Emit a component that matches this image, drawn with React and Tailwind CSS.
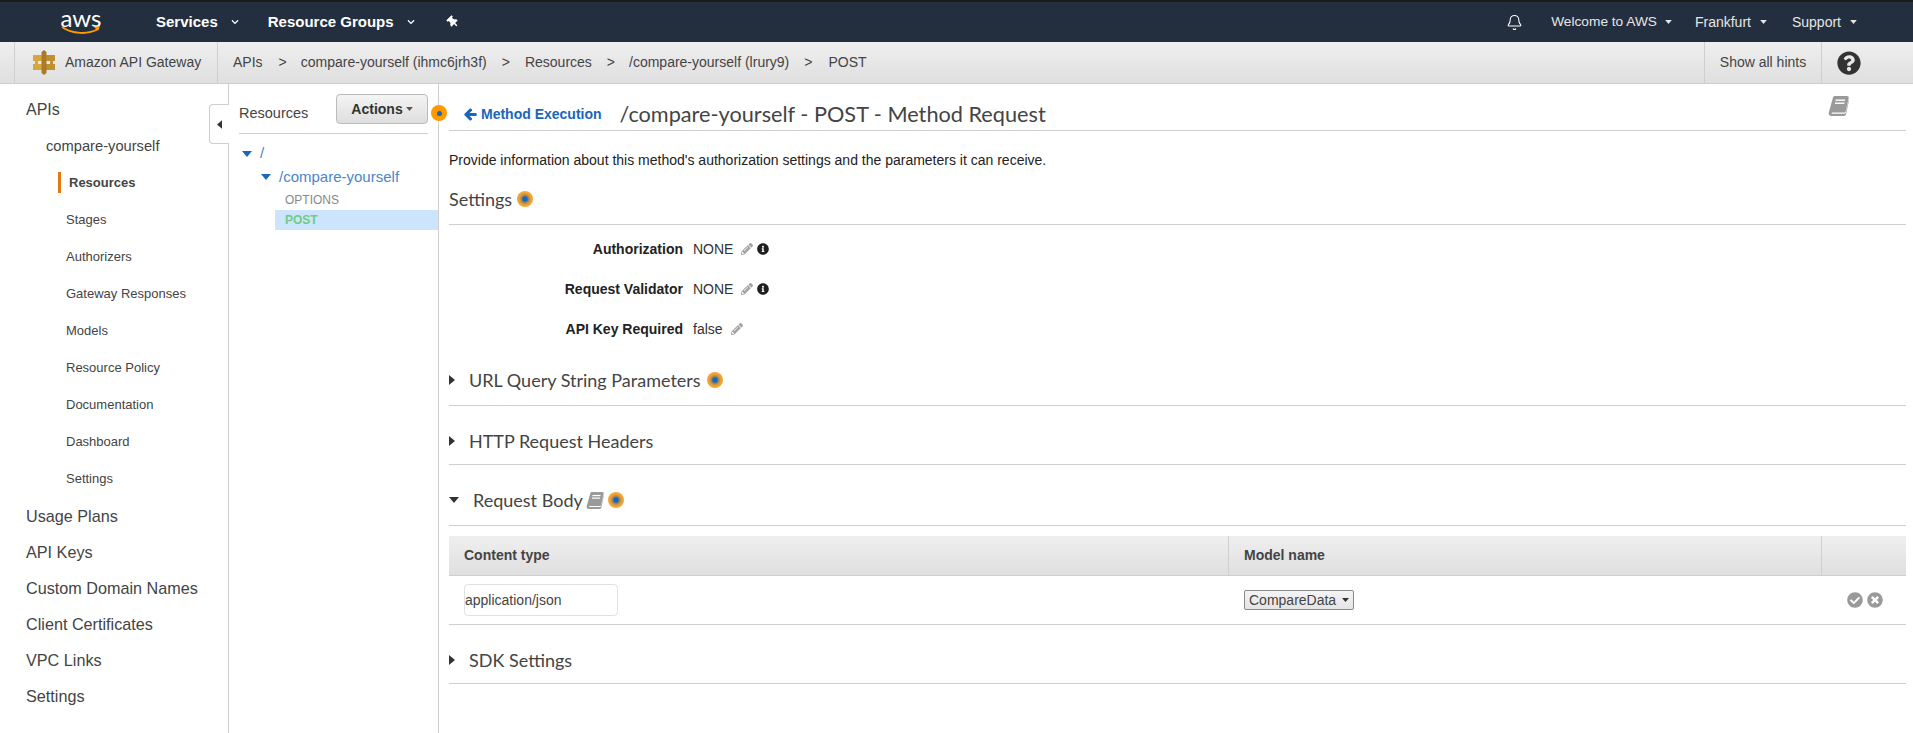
import { Bell } from "lucide-react";
import {
  FaArrowLeft,
  FaCheckCircle,
  FaChevronDown,
  FaInfoCircle,
  FaPencilAlt,
  FaQuestionCircle,
  FaThumbtack,
  FaTimesCircle,
} from "react-icons/fa";

const arial = "font-['Liberation_Sans',Arial,sans-serif]";
const lato = "font-['Lato',sans-serif]";

const CaretDown = ({ className = "" }) => (
  <svg viewBox="0 0 10 6" className={className}>
    <polygon points="0,0 10,0 5,6" fill="currentColor" />
  </svg>
);

const CaretRight = ({ className = "" }) => (
  <svg viewBox="0 0 6 10" className={className}>
    <polygon points="0,0 6,5 0,10" fill="currentColor" />
  </svg>
);

const BookIcon = ({ className = "" }) => (
  <svg viewBox="0 0 21 20" className={className}>
    <path
      d="M5 1.5C5.3.6 6 0 7 0h12c1.2 0 2 .9 1.7 2l-3 13.2c-.3 1-.9 1.4-1.8 1.4H4.500c-.9 0-1.200.9-.6 1.100h12.500c.6 0 1-.3 1.200-.8L20.800 3.500l.2 1-3 13.800c-.2 1-1 1.700-2 1.700H3.500C1.500 20 .3 18.500.7 16.700z"
      fill="#9a9a9a"
    />
    <rect x="7.500" y="3.500" width="9.500" height="1.400" fill="#fff" />
    <rect x="7" y="6.500" width="9.500" height="1.400" fill="#fff" />
  </svg>
);

const GatewayIcon = () => (
  <svg viewBox="0 0 22 25" className="w-[22px] h-[25px]">
    <path d="M0 5h10v6H5v3h5v6H0v-6h2V11H0z" fill="#d8a63f" />
    <path d="M12 5h10v6h-2v3h2v6H12v-6h5v-3h-5z" fill="#c08f30" />
    <path d="M8.500 2l2.500-2 2.500 2v21l-2.500 2-2.500-2z" fill="#a97b28" />
  </svg>
);

const Hint = ({ className = "" }) => (
  <span
    className={`inline-block w-4 h-4 rounded-full shrink-0 bg-[radial-gradient(circle,#1a66b8_0%,#1a66b8_18%,#a98a5a_34%,#f2a02c_52%,#fbb64a_100%)] ${className}`}
  />
);

const navItems = [
  "Stages",
  "Authorizers",
  "Gateway Responses",
  "Models",
  "Resource Policy",
  "Documentation",
  "Dashboard",
  "Settings",
];

const bottomItems = [
  "Usage Plans",
  "API Keys",
  "Custom Domain Names",
  "Client Certificates",
  "VPC Links",
  "Settings",
];

const TopBar = () => (
  <header className="h-[42px] shrink-0 bg-[#232f3e] border-t-2 border-[#1b1b1b] flex items-center text-[14px] text-[#e6e6e6]">
    <div className="w-[61px]" />
    <div className="w-[40px] h-[24px] relative flex justify-center">
      <span className={`${lato} text-[24px] leading-[20px] text-white -mt-[2px]`}>aws</span>
      <svg viewBox="0 0 40 10" className="absolute left-0 top-[15px] w-[40px] h-[10px]">
        <path d="M1 2c10 7 26 8 36 2" stroke="#f90" strokeWidth="2" fill="none" />
        <path d="M33 2l6-1-2 5z" fill="#f90" />
      </svg>
    </div>
    <div className="ml-[55px] flex items-center font-bold text-[15px] text-white">
      <span>Services</span>
      <FaChevronDown className="ml-[13px] w-[8px] h-[8px]" />
      <span className="ml-[29px]">Resource Groups</span>
      <FaChevronDown className="ml-[13px] w-[8px] h-[8px]" />
      <FaThumbtack className="ml-[32px] w-[12px] h-[12px] -rotate-45" />
    </div>
    <div className="ml-auto flex items-center">
      <Bell className="w-[17px] h-[17px] text-white" strokeWidth={1.5} />
      <span className="ml-[28px] text-[13.700px]">Welcome to AWS</span>
      <CaretDown className="ml-[8px] w-[7px] h-[4px]" />
      <span className="ml-[23px]">Frankfurt</span>
      <CaretDown className="ml-[9px] w-[7px] h-[4px]" />
      <span className="ml-[25px]">Support</span>
      <CaretDown className="ml-[9px] w-[7px] h-[4px] mr-[56px]" />
    </div>
  </header>
);

const BreadcrumbBar = () => (
  <div className="h-[42px] shrink-0 bg-gradient-to-b from-[#efefef] to-[#dfdfdf] border-b border-[#cfcfcf] flex items-stretch text-[14px] text-[#444]">
    <div className="w-[15px] border-r border-[#cfcfcf]" />
    <div className="w-[203px] border-r border-[#cfcfcf] flex items-center pl-[18px]">
      <GatewayIcon />
      <span className="ml-[10px]">Amazon API Gateway</span>
    </div>
    <div className="flex items-center pl-[15px]">
      <span>APIs</span>
      <span className="ml-[16px]">&gt;</span>
      <span className="ml-[14px]">compare-yourself (ihmc6jrh3f)</span>
      <span className="ml-[15px]">&gt;</span>
      <span className="ml-[15px]">Resources</span>
      <span className="ml-[15px]">&gt;</span>
      <span className="ml-[14px]">/compare-yourself (lrury9)</span>
      <span className="ml-[15px]">&gt;</span>
      <span className="ml-[16px]">POST</span>
    </div>
    <div className="ml-auto w-[118px] border-l border-r border-[#cfcfcf] flex items-center justify-center">
      Show all hints
    </div>
    <div className="w-[91px] flex items-center pl-[15px]">
      <FaQuestionCircle className="w-[24px] h-[24px] text-[#333]" />
    </div>
  </div>
);

const Sidebar = () => (
  <aside className="w-[229px] shrink-0 border-r border-[#cfcfcf] pt-[8px] text-[#444]">
    <div className="h-[36px] flex items-center pl-[26px] text-[16px]">APIs</div>
    <div className="h-[36px] flex items-center pl-[46px] text-[14.700px]">compare-yourself</div>
    <div className="h-[37px] flex items-center pl-[58px] text-[13px] font-bold">
      <span className="w-[3px] h-[21px] bg-[#e47911] mr-[8px]" />
      Resources
    </div>
    {navItems.map((item) => (
      <div key={item} className="h-[37px] flex items-center pl-[66px] text-[13px]">
        {item}
      </div>
    ))}
    <div className="mt-[1px]">
      {bottomItems.map((item, i) => (
        <div key={i} className="h-[36px] flex items-center pl-[26px] text-[16.200px]">
          {item}
        </div>
      ))}
    </div>
  </aside>
);

const ResourcePanel = () => (
  <section className="w-[210px] shrink-0 border-r border-[#cfcfcf] relative pt-[10px]">
    {/* collapse tab */}
    <div className="absolute -left-[20px] top-[20px] w-[20px] h-[40px] bg-white border border-r-0 border-[#cfcfcf] rounded-l flex items-center justify-center text-[#333]">
      <CaretRight className="w-[5px] h-[9px] rotate-180" />
    </div>
    {/* hint sits on the divider */}
    <span className="absolute -right-[9px] top-[21px] w-4 h-4 rounded-full bg-[#ff9900] flex items-center justify-center z-10">
      <span className="w-[5px] h-[5px] rounded-full bg-[#1a66b8]" />
    </span>
    <div className="ml-[10px] mr-[10px] h-[40px] border-b border-[#cfcfcf] flex items-start justify-between">
      <span className="text-[14.500px] text-[#444] mt-[9px]">Resources</span>
      <button className="w-[92px] h-[30px] rounded border border-[#bbb] bg-gradient-to-b from-[#f4f4f4] to-[#dedede] text-[14px] font-bold text-[#333] flex items-center justify-center">
        Actions
        <CaretDown className="ml-[3px] w-[7px] h-[4px] text-[#555]" />
      </button>
    </div>
    <div className="h-[38px] flex items-center pl-[13px] pt-[1px] text-[15px] text-[#4a86c8]">
      <CaretDown className="w-[10px] h-[6px] text-[#1a66b8]" />
      <span className="ml-[8px]">/</span>
    </div>
    <div className="h-[24px] flex items-center pl-[32px] -mt-[7px] text-[15px] text-[#4a86c8]">
      <CaretDown className="w-[10px] h-[6px] text-[#1a66b8]" />
      <span className="ml-[8px]">/compare-yourself</span>
    </div>
    <div className="h-[20px] ml-[46px] pl-[10px] flex items-center text-[12px] text-[#888] mt-[1px]">OPTIONS</div>
    <div className="h-[20px] ml-[46px] pl-[10px] flex items-center text-[12px] font-bold text-[#6ecb86] bg-[#cde5fc]">
      POST
    </div>
  </section>
);

const SectionHead = ({ children, className = "" }) => (
  <div className={`flex items-center border-b border-[#cfcfcf] ${className}`}>{children}</div>
);

const SectionTitle = ({ children, className = "" }) => (
  <span className={`${lato} text-[18px] leading-[24px] text-[#444] ${className}`}>{children}</span>
);

const SettingRow = ({ label, value, info }) => (
  <div className="h-[40px] flex items-center text-[14px]">
    <span className="w-[234px] text-right font-bold text-[#222]">{label}</span>
    <span className="ml-[10px] text-[#333]">{value}</span>
    <FaPencilAlt className="ml-[8px] w-[12px] h-[12px] text-[#a3a3a3]" />
    {info && <FaInfoCircle className="ml-[4px] w-[12px] h-[12px] text-[#1f1f1f]" />}
  </div>
);

const MethodPanel = () => (
  <main className="flex-1 min-w-0 pl-[10px] pr-[7px]">
    <div className="h-[47px] pt-[15px] border-b border-[#cfcfcf] flex items-center">
      <a className="ml-[15px] flex items-center text-[14px] font-bold text-[#1a66b8]">
        <FaArrowLeft className="w-[13px] h-[13px] mr-[4px]" stroke="currentColor" strokeWidth={40} />
        Method Execution
      </a>
      <h1 className={`${lato} ml-[18px] text-[21.700px] font-normal text-[#444]`}>
        /compare-yourself - POST - Method Request
      </h1>
      <BookIcon className="ml-auto mr-[57px] w-[21px] h-[20px] -mt-[17px]" />
    </div>

    <p className="mt-[19px] text-[14px] leading-[20px] text-[#222]">
      Provide information about this method's authorization settings and the parameters it can
      receive.
    </p>

    <SectionHead className="mt-[17px] pb-[13px]">
      <SectionTitle>Settings</SectionTitle>
      <Hint className="ml-[5px]" />
    </SectionHead>

    <div className="mt-[4px]">
      <SettingRow label="Authorization" value="NONE" info />
      <SettingRow label="Request Validator" value="NONE" info />
      <SettingRow label="API Key Required" value="false" />
    </div>

    <SectionHead className="mt-[19px] pb-[13px]">
      <CaretRight className="w-[6px] h-[10px] text-[#333]" />
      <SectionTitle className="ml-[14px]">URL Query String Parameters</SectionTitle>
      <Hint className="ml-[6px]" />
    </SectionHead>

    <SectionHead className="mt-[23px] pb-[11px]">
      <CaretRight className="w-[6px] h-[10px] text-[#333]" />
      <SectionTitle className="ml-[14px]">HTTP Request Headers</SectionTitle>
    </SectionHead>

    <SectionHead className="mt-[23px] pb-[13px]">
      <CaretDown className="w-[10px] h-[6px] text-[#333]" />
      <SectionTitle className="ml-[14px]">Request Body</SectionTitle>
      <BookIcon className="ml-[3px] w-[18px] h-[17px]" />
      <Hint className="ml-[4px]" />
    </SectionHead>

    <div className="mt-[10px] h-[40px] bg-gradient-to-b from-[#efefef] to-[#dfdfdf] border-b border-[#cfcfcf] flex items-stretch text-[14px] font-bold text-[#444]">
      <div className="w-[779px] flex items-center pl-[15px]">Content type</div>
      <div className="w-[593px] flex items-center pl-[15px] border-l border-[#cfcfcf]">Model name</div>
      <div className="flex-1 border-l border-[#cfcfcf]" />
    </div>

    <div className="h-[49px] border-b border-[#cfcfcf] flex items-center text-[14px] text-[#444]">
      <div className="w-[779px] pl-[15px]">
        <input
          readOnly
          value="application/json"
          className="w-[154px] h-[32px] rounded border border-[#e0e0e0] outline-none"
        />
      </div>
      <div className="w-[593px] pl-[16px]">
        <div className="w-[110px] h-[20px] rounded-[2px] border border-[#8a8a8a] bg-gradient-to-b from-[#f4f4f4] to-[#e4e4e4] flex items-center pl-[4px]">
          CompareData
          <CaretDown className="ml-[6px] w-[7px] h-[6px] text-[#333]" />
        </div>
      </div>
      <div className="flex-1 flex items-center pl-[26px] gap-[4px] text-[#9a9a9a]">
        <FaCheckCircle className="w-[16px] h-[16px]" />
        <FaTimesCircle className="w-[16px] h-[16px]" />
      </div>
    </div>

    <SectionHead className="mt-[23px] pb-[11px]">
      <CaretRight className="w-[6px] h-[10px] text-[#333]" />
      <SectionTitle className="ml-[14px]">SDK Settings</SectionTitle>
    </SectionHead>
  </main>
);

export default function App() {
  return (
    <div className={`${arial} h-screen flex flex-col overflow-hidden bg-white`}>
      <TopBar />
      <BreadcrumbBar />
      <div className="flex-1 flex min-h-0">
        <Sidebar />
        <ResourcePanel />
        <MethodPanel />
      </div>
    </div>
  );
}
